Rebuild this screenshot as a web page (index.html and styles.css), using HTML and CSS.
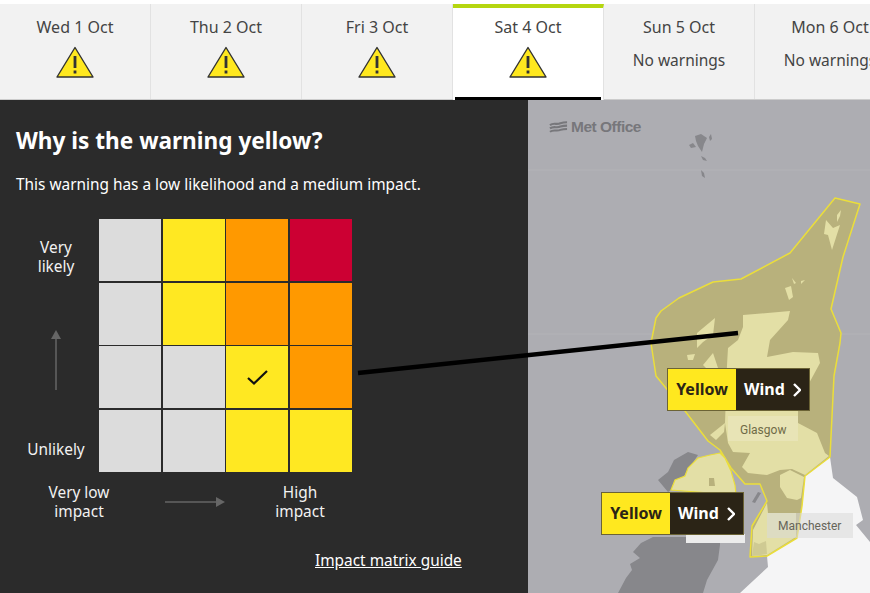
FILE: index.html
```html
<!DOCTYPE html>
<html lang="en">
<head>
  <meta charset="UTF-8">
  <meta name="viewport" content="width=device-width, initial-scale=1.0">
  <title>Why is the warning yellow?</title>
  <link rel="stylesheet" href="styles.css">
</head>
<body>
  <!-- Day tabs -->
  <div class="tabs">
    <div class="tab">
      <span>Wed 1 Oct</span>
      <svg class="warning-icon" viewBox="0 0 38 32"><path d="M19 1.500 37 31H1Z" fill="#ffe81f" stroke="#333" stroke-width="1.400" stroke-linejoin="round"/><path d="M19 10v12M19 24.500v3" stroke="#333" stroke-width="2.800" fill="none"/></svg>
    </div>
    <div class="tab">
      <span>Thu 2 Oct</span>
      <svg class="warning-icon" viewBox="0 0 38 32"><path d="M19 1.500 37 31H1Z" fill="#ffe81f" stroke="#333" stroke-width="1.400" stroke-linejoin="round"/><path d="M19 10v12M19 24.500v3" stroke="#333" stroke-width="2.800" fill="none"/></svg>
    </div>
    <div class="tab">
      <span>Fri 3 Oct</span>
      <svg class="warning-icon" viewBox="0 0 38 32"><path d="M19 1.500 37 31H1Z" fill="#ffe81f" stroke="#333" stroke-width="1.400" stroke-linejoin="round"/><path d="M19 10v12M19 24.500v3" stroke="#333" stroke-width="2.800" fill="none"/></svg>
    </div>
    <div class="tab active">
      <span>Sat 4 Oct</span>
      <svg class="warning-icon" viewBox="0 0 38 32"><path d="M19 1.500 37 31H1Z" fill="#ffe81f" stroke="#333" stroke-width="1.400" stroke-linejoin="round"/><path d="M19 10v12M19 24.500v3" stroke="#333" stroke-width="2.800" fill="none"/></svg>
    </div>
    <div class="tab">
      <span>Sun 5 Oct</span>
      <span class="no-warnings">No warnings</span>
    </div>
    <div class="tab">
      <span>Mon 6 Oct</span>
      <span class="no-warnings">No warnings</span>
    </div>
  </div>

  <div class="content">
    <!-- Impact matrix -->
    <div class="panel">
      <h1>Why is the warning yellow?</h1>
      <p class="summary">This warning has a low likelihood and a medium impact.</p>

      <div class="matrix">
        <div class="y-axis">
          <span>Very<br>likely</span>
          <svg class="arrow-up" viewBox="0 0 10 60"><path d="M5 8v52" stroke="#666" stroke-width="1.500"/><path d="M5 0 10 9H0Z" fill="#666"/></svg>
          <span>Unlikely</span>
        </div>
        <div class="grid">
          <div class="cell grey"></div>
          <div class="cell yellow"></div>
          <div class="cell orange"></div>
          <div class="cell red"></div>
          <div class="cell grey"></div>
          <div class="cell yellow"></div>
          <div class="cell orange"></div>
          <div class="cell orange"></div>
          <div class="cell grey"></div>
          <div class="cell grey"></div>
          <div class="cell yellow"><svg class="check" viewBox="0 0 21 15"><path d="M1 8 7 13.500 20 1" fill="none" stroke="#111" stroke-width="2.200"/></svg></div>
          <div class="cell orange"></div>
          <div class="cell grey"></div>
          <div class="cell grey"></div>
          <div class="cell yellow"></div>
          <div class="cell yellow"></div>
        </div>
      </div>

      <div class="x-axis">
        <span class="x-low">Very low<br>impact</span>
        <svg class="arrow-right" viewBox="0 0 60 10"><path d="M0 5h52" stroke="#666" stroke-width="1.500"/><path d="M60 5 51 0v10Z" fill="#666"/></svg>
        <span class="x-high">High<br>impact</span>
      </div>

      <a class="guide-link" href="#">Impact matrix guide</a>
    </div>

    <!-- Map -->
    <div class="map">
      <svg class="map-art" viewBox="0 0 342 493">
        <path d="M0 70H342M0 234H342" stroke="#b3b3b7" stroke-width="1"/>
        <!-- Northern islands -->
        <g fill="#87878b">
          <path d="M167 36 173 34 179 38 176 44 174 52 170 46 168 41Z"/>
          <path d="M161 45 165 43 168 47 163 48Z"/>
          <path d="M181 37 183 34 184 39 182 41Z"/>
          <path d="M173 56 177 58 179 61 175 60Z"/>
          <path d="M173 70 176 73 177 78 174 76Z"/>
        </g>
        <!-- Ireland and Man -->
        <g fill="#87878b">
          <path d="M130 380 140 372 146 360 160 352 170 355 160 370 150 385 140 392Z"/>
          <path d="M113 443 125 437 192 437 192 445 190 460 179 480 175 493 90 493 98 478 104 470 102 464 112 458 105 452Z"/>
          <path d="M224 402 230 392 233 393 227 403Z"/>
        </g>
        <!-- England -->
        <path d="M302 357 305 378 329 397 335 420 328 425 342 442V493H212L240 467 239 456 269 438 274 406 277 376Z" fill="#f5f5f6"/>
        <!-- Warning area -->
        <path class="warning-area" d="M307 98 332 104 315 157 303 209 313 233 312 243 306 276 302 357 277 376 274 406 269 438 239 456 222 457 224 426 239 401 232 384 217 384 203 368 192 350 180 341 157 311 128 276 123 243 128 218 133 211 151 198 185 182 213 179 262 153Z"/>
        <!-- Land inside the warning -->
        <g fill="#e3dfa6">
          <path d="M215 215 262 211 260 220 242 240 239 257 265 252 290 253 292 263 279 287 270 300 270 323 289 333 297 353 301 356 277 375 264 369 252 370 239 375 220 373 214 367 222 353 205 352 200 343 197 323 199 265 200 248 210 240 215 227Z"/>
          <path d="M252 375 262 370 276 377 273 398 269 400 259 398 252 387Z"/>
          <path d="M240 413 268 413 268 437 239 455 224 456 225 430 239 403Z"/>
          <path d="M169 233 187 218 185 235 175 242 169 248Z"/>
          <path d="M159 255 167 254 165 260 160 260Z"/>
          <path d="M175 265 185 253 190 268 180 270Z"/>
          <path d="M182 335 197 323 196 332 188 340Z"/>
          <path d="M298 120 305 128 312 125 304 150 300 135 296 134Z"/>
          <path d="M309 115 313 110 312 116 309 122Z"/>
          <path d="M257 188 263 186 265 197 261 200Z"/>
          <path d="M264 178 268 183 266 184Z"/>
          <path d="M273 181 277 180 273 184Z"/>
        </g>
        <path d="M224 456 226 442 231 444 238 441 239 454Z" fill="#cfca93"/>
        <!-- Northern Ireland warning -->
        <path class="warning-ni" d="M192 353 182 355 170 358 160 368 157 376 147 380 143 390 208 395 207 385 203 371 197 358Z"/>
        <path d="M181 378 186 378 187 386 181 386Z" fill="#b8b17c"/>
        <!-- Place labels -->
        <rect x="200" y="316" width="70" height="25" fill="#fff" opacity="0.18"/>
        <rect x="239" y="413" width="86" height="25" fill="#d8d8d8" opacity="0.55"/>
        <rect x="158" y="434" width="59" height="9" fill="#ececec"/>
      </svg>

      <div class="logo">
        <svg class="logo-waves" viewBox="0 0 20 13"><path d="M1 4C5 1 8 4 12 2 15 1 17 1 19 1M1 7.500C5 4.500 8 7.500 12 5.500 15 4.500 17 4.500 19 4.500M1 11C5 8 8 11 12 9 15 8 17 8 19 8" fill="none" stroke="#77777b" stroke-width="2.200"/></svg>
        <span>Met Office</span>
      </div>

      <span class="place glasgow">Glasgow</span>
      <span class="place manchester">Manchester</span>

      <div class="map-label label-north">
        <span class="label-level">Yellow</span>
        <span class="label-type">Wind <svg class="chevron" viewBox="0 0 8 14"><path d="M1 1 7 7 1 13" fill="none" stroke="#fff" stroke-width="2.400"/></svg></span>
      </div>
      <div class="map-label label-south">
        <span class="label-level">Yellow</span>
        <span class="label-type">Wind <svg class="chevron" viewBox="0 0 8 14"><path d="M1 1 7 7 1 13" fill="none" stroke="#fff" stroke-width="2.400"/></svg></span>
      </div>
    </div>

    <!-- Line from the ticked cell to the map -->
    <svg class="connector" viewBox="0 0 870 493"><path d="M358 273 738 233" stroke="#000" stroke-width="4.500"/></svg>
  </div>
</body>
</html>
```

FILE: styles.css
```css
html, body {
  height: 100%;
}
body {
  font-family: "Noto Sans", sans-serif;
  margin: 0;
  padding-top: 4px;
  box-sizing: border-box;
  background-color: #fff;
  overflow: hidden;
  display: flex;
  flex-direction: column;
}
.tabs {
  display: flex;
  height: 96px;
  flex: none;
  background-color: #f2f2f2;
  border-bottom: 1px solid #ccc;
  box-sizing: border-box;
}
.tab {
  flex: 0 0 151px;
  box-sizing: border-box;
  display: flex;
  flex-direction: column;
  align-items: center;
  padding-top: 13px;
  font-size: 16px;
  line-height: 20px;
  color: #444;
  border-right: 1px solid #e2e2e2;
  position: relative;
  white-space: nowrap;
}
.tab.active {
  background-color: #fff;
  border-top: 4px solid #b5d60f;
  padding-top: 9px;
  margin-bottom: -1px;
}
.tab.active::after {
  content: "";
  position: absolute;
  left: 2px;
  right: 2px;
  bottom: 0;
  height: 3px;
  background-color: #000;
}
.warning-icon {
  width: 38px;
  height: 32px;
  margin-top: 9px;
}
.no-warnings {
  margin-top: 13px;
  font-size: 15.500px;
}
.content {
  flex: 1;
  display: flex;
  position: relative;
  min-height: 0;
}
.panel {
  flex: 0 0 528px;
  box-sizing: border-box;
  background-color: #2b2b2b;
  color: #f2f2f2;
  padding: 25px 16px 0;
  font-size: 15.400px;
  line-height: 19px;
}
h1 {
  font-size: 22.600px;
  line-height: 32px;
  margin: 0;
  color: #fff;
}
.summary {
  margin: 18px 0 0;
  line-height: 20px;
  color: #fff;
}
.matrix {
  display: flex;
  gap: 3px;
  margin-top: 24px;
}
.y-axis {
  flex: 0 0 80px;
  display: flex;
  flex-direction: column;
  align-items: center;
  justify-content: space-between;
  text-align: center;
  padding: 19px 0 13px;
  box-sizing: border-box;
}
.arrow-up {
  width: 10px;
  height: 60px;
  margin-top: 4px;
}
.grid {
  flex: 0 0 253px;
  height: 253px;
  display: grid;
  grid-template-columns: repeat(4, 1fr);
  grid-template-rows: repeat(4, 1fr);
  gap: 1.500px;
}
.cell {
  display: flex;
  align-items: center;
  justify-content: center;
}
.grey {
  background-color: #dcdcdc;
}
.yellow {
  background-color: #ffe822;
}
.orange {
  background-color: #ff9900;
}
.red {
  background-color: #cc0033;
}
.check {
  width: 21px;
  height: 15px;
}
.x-axis {
  display: flex;
  align-items: center;
  margin-top: 11px;
  text-align: center;
}
.x-low {
  flex: 0 0 126px;
}
.arrow-right {
  width: 60px;
  height: 10px;
  margin: 0 23px;
}
.x-high {
  flex: 0 0 104px;
}
.guide-link {
  display: block;
  width: max-content;
  margin: 30px 0 0 299px;
  color: #fff;
  line-height: 20px;
}
.map {
  flex: 1;
  position: relative;
  background-color: #adadb2;
  overflow: hidden;
}
.map-art {
  position: absolute;
  left: 0;
  top: 0;
  width: 342px;
  height: 493px;
}
.warning-area {
  fill: #b8b17c;
  stroke: #ebde3a;
  stroke-width: 1.500;
  stroke-linejoin: round;
}
.warning-ni {
  fill: #e3dfa6;
  stroke: #ebde3a;
  stroke-width: 1.200;
}
.logo {
  position: absolute;
  left: 21px;
  top: 18px;
  display: flex;
  align-items: center;
  gap: 3px;
  color: #77777b;
  font-family: "Liberation Sans", sans-serif;
  font-weight: bold;
  font-size: 15.500px;
  line-height: 18px;
  letter-spacing: -0.500px;
}
.logo-waves {
  width: 19px;
  height: 13px;
}
.place {
  position: absolute;
  font-family: Roboto, sans-serif;
  font-size: 12px;
  line-height: 16px;
  color: #6f6b47;
}
.glasgow {
  left: 212px;
  top: 322px;
}
.manchester {
  left: 250px;
  top: 418px;
  color: #66655a;
}
.map-label {
  position: absolute;
  display: flex;
  height: 43px;
  font-weight: bold;
  font-size: 16px;
  box-sizing: border-box;
  border: 1px solid #6b6335;
}
.label-north {
  left: 139px;
  top: 268px;
}
.label-south {
  left: 73px;
  top: 392px;
}
.label-level {
  background-color: #ffe81f;
  color: #2b2416;
  width: 68px;
  display: flex;
  align-items: center;
  justify-content: center;
  padding-bottom: 2px;
  box-sizing: border-box;
}
.label-type {
  background-color: #2b2416;
  color: #fff;
  width: 73px;
  display: flex;
  align-items: center;
  justify-content: center;
  gap: 8px;
  padding-bottom: 2px;
  box-sizing: border-box;
}
.chevron {
  width: 8px;
  height: 14px;
  margin-top: 2px;
}
.connector {
  position: absolute;
  left: 0;
  top: 0;
  width: 870px;
  height: 493px;
  pointer-events: none;
}
```
